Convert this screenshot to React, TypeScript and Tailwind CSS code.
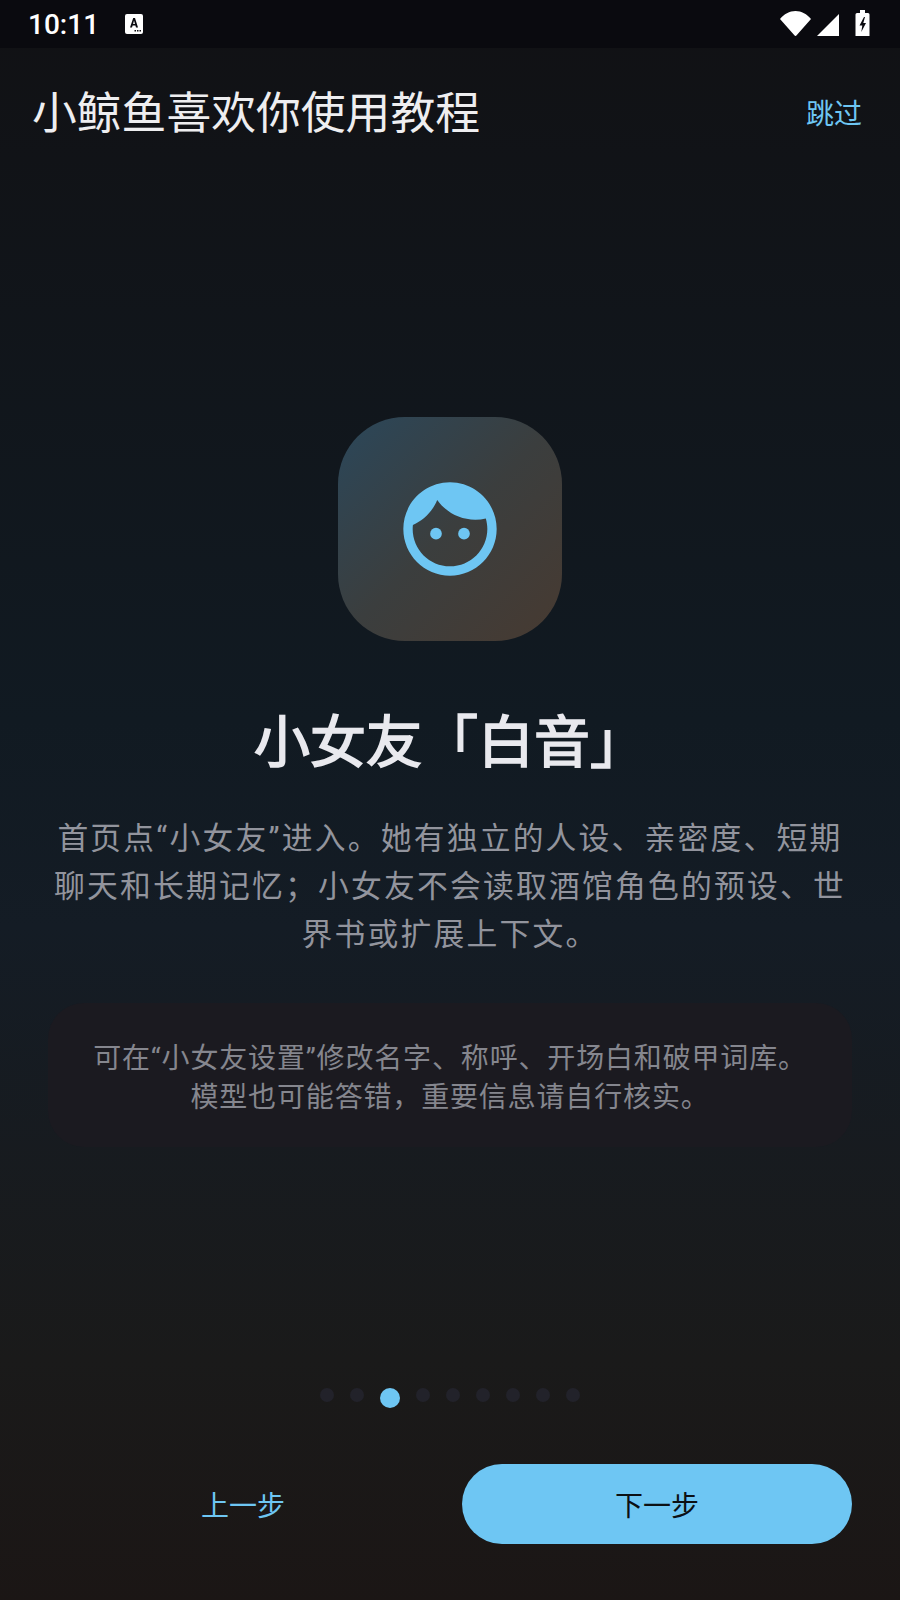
const font = { fontFamily: 'Roboto, "Noto Sans CJK SC", "Noto Sans", sans-serif' };

function Face() {
  return (
    <svg width="112" height="112" viewBox="0 0 24 24" fill="#6ec6f3">
      <circle cx="9" cy="13" r="1.25" />
      <circle cx="15" cy="13" r="1.25" />
      <path d="M12 2C6.48 2 2 6.48 2 12s4.48 10 10 10 10-4.48 10-10S17.52 2 12 2zm0 18c-4.41 0-8-3.59-8-8 0-.29.02-.58.05-.86 2.36-1.05 4.23-2.98 5.21-5.37C11.07 8.33 14.05 10 17.42 10c.78 0 1.53-.09 2.25-.26.21.71.33 1.47.33 2.26 0 4.41-3.59 8-8 8z" />
    </svg>
  );
}

function StatusBar() {
  return (
    <div className="flex h-12 items-end bg-[#0a0a0f] pb-3 pl-[28px] pr-[30px] text-white">
      <span className="mb-[-3px] text-[28px] leading-[28px] font-medium">10:11</span>
      <svg className="mb-[1px] ml-[25px]" width="20" height="22" viewBox="0 0 20 22">
        <rect x="1" y="1" width="18" height="20" rx="2" fill="#fff" />
        <path d="M6 14.500 9.200 5h1.800L14 14.500h-2l-.6-2H8.600l-.6 2zM9.100 11h1.900L10 7.600z" fill="#0a0a0f" />
        <path d="M10.500 17h1.500v1.500h-1.500zM13 17h1.500v1.500H13zM15.500 17H17v1.500h-1.500z" fill="#0a0a0f" />
      </svg>
      <div className="ml-auto flex items-end">
        <svg width="31" height="25" viewBox="0 0 31 25">
          <path d="M0 8C4 3 9.500 0 15.500 0S27 3 31 8L16.400 24.500a1.200 1.200 0 0 1-1.800 0z" fill="#fff" />
        </svg>
        <svg className="ml-[6px]" width="22" height="22" viewBox="0 0 22 22">
          <path d="M0 22 22 0v22z" fill="#fff" />
        </svg>
        <svg className="ml-[16px]" width="15" height="26" viewBox="0 0 15 26">
          <path d="M2 3h3V0h5v3h3a1.500 1.500 0 0 1 1.500 1.500V26H.5V4.500A1.500 1.500 0 0 1 2 3z" fill="#fff" />
          <path d="M9 7 4.500 15.500h2.800L6.300 22 11 13H8.300l1.700-6z" fill="#0a0a0f" />
        </svg>
      </div>
    </div>
  );
}

export default function App() {
  const dots = [0, 1, 2, 3, 4, 5, 6, 7, 8];
  return (
    <div
      className="flex h-[1600px] w-[900px] flex-col overflow-hidden bg-[linear-gradient(180deg,#111114_0%,#111a22_45%,#141c25_58%,#1a1a1a_85%,#1b1615_100%)]"
      style={font}
    >
      <StatusBar />
      <div className="flex h-[128px] items-start justify-between pl-[32px] pr-[38px]">
        <h1 className="pt-[36px] text-[44.8px] leading-[60px] font-normal text-[#eeeef0]">小鲸鱼喜欢你使用教程</h1>
        <button className="pt-[47px] text-[28px] leading-[40px] text-[#6ec6f3]">跳过</button>
      </div>

      <main className="flex flex-col items-center pt-[241px]">
        <div className="flex h-[224px] w-[224px] items-center justify-center rounded-[67px] bg-[linear-gradient(135deg,#2b475a_0%,#3b3e3e_50%,#473a31_100%)]">
          <Face />
        </div>
        <h2 className="mt-[64px] text-[56px] leading-[76px] font-normal text-[#e9e9ee] [-webkit-text-stroke:1.7px_#e9e9ee]">小女友「白音」</h2>
        <p className="mt-[34px] w-[800px] text-center text-[30.8px] leading-[48px] tracking-[2.2px] text-[#92949d]">
          首页点“小女友”进入。她有独立的人设、亲密度、短期聊天和长期记忆；小女友不会读取酒馆角色的预设、世界书或扩展上下文。
        </p>
        <div className="mt-[44px] flex h-[144px] w-[804px] flex-col items-center justify-center rounded-[36px] bg-[#1b1a20] pt-2 text-center text-[28px] leading-[38.7px] tracking-[0.84px] text-[#85868e]">
          <p>可在“小女友设置”修改名字、称呼、开场白和破甲词库。</p>
          <p>模型也可能答错，重要信息请自行核实。</p>
        </div>
      </main>

      <div className="mt-auto flex h-[26px] items-start justify-center">
        {dots.map((d) =>
          d === 2 ? (
            <span key={d} className="mx-[8px] mt-[1px] h-5 w-5 rounded-full bg-[#6ec6f3]" />
          ) : (
            <span key={d} className="mx-[8px] mt-[1px] h-[14px] w-[14px] rounded-full bg-[#22222a]" />
          ),
        )}
      </div>

      <div className="flex items-center gap-6 px-12 pt-[51px] pb-[56px]">
        <button className="h-20 flex-1 pt-[6px] text-[28px] text-[#6ec6f3]">上一步</button>
        <button className="h-20 flex-1 rounded-full bg-[#6ec6f3] pt-[6px] text-[28px] text-[#0c1014]">下一步</button>
      </div>
    </div>
  );
}
